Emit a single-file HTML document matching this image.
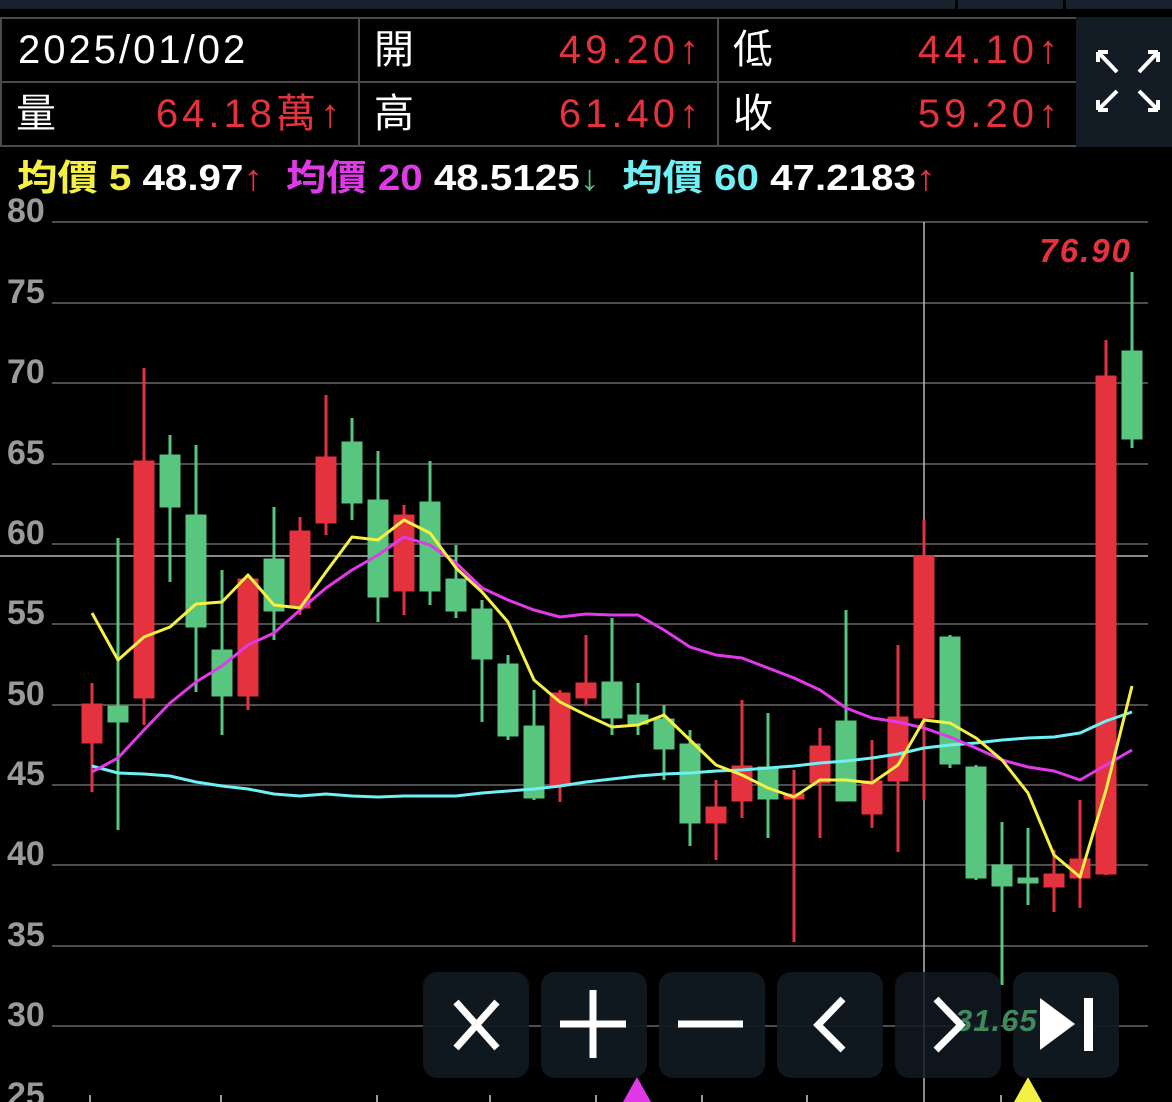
<!DOCTYPE html>
<html><head><meta charset="utf-8"><style>
html,body{margin:0;padding:0;background:#000;width:1172px;height:1102px;overflow:hidden}
body{position:relative;font-family:"Liberation Sans","Noto Sans CJK TC",sans-serif}
.top{position:absolute;left:0;top:0;width:1172px;height:9px;background:#18212c}
.cell{position:absolute;box-sizing:border-box;border:2px solid #4a4a4a;height:66px;color:#fff;font-size:40px;line-height:62px}
.cell .l{position:absolute;left:14px;top:0}
.cell .r{position:absolute;right:14px;top:0;color:#e5323f;letter-spacing:4px}
.side{position:absolute;left:1076px;top:17px;width:96px;height:130px;background:#131c25}
.leg{position:absolute;left:17px;top:157px;font-size:36px;font-weight:bold;white-space:nowrap;line-height:42px;transform:scaleX(1.12);transform-origin:0 0}
.btn{position:absolute;top:972px;width:106px;height:106px;border-radius:14px;background:rgba(17,25,33,0.95)}
</style></head><body>
<div class="top"></div>
<div style="position:absolute;left:955px;top:0;width:3px;height:9px;background:#000"></div>
<div style="position:absolute;left:1063px;top:0;width:3px;height:9px;background:#000"></div>
<div class="cell" style="left:0;top:17px;width:360px"><span class="l" style="left:16px;letter-spacing:3px">2025/01/02</span></div>
<div class="cell" style="left:358px;top:17px;width:361px"><span class="l">開</span><span class="r">49.20↑</span></div>
<div class="cell" style="left:717px;top:17px;width:361px"><span class="l">低</span><span class="r">44.10↑</span></div>
<div class="cell" style="left:0;top:81px;width:360px"><span class="l">量</span><span class="r">64.18萬↑</span></div>
<div class="cell" style="left:358px;top:81px;width:361px"><span class="l">高</span><span class="r">61.40↑</span></div>
<div class="cell" style="left:717px;top:81px;width:361px"><span class="l">收</span><span class="r">59.20↑</span></div>
<div class="side"><svg width="96" height="130" viewBox="1076 17 96 130" stroke="#fff" stroke-width="4" fill="none">
<path d="M1098 52L1117 72M1098 52h10M1098 52v10"/><path d="M1158 52L1139 72M1158 52h-10M1158 52v10"/>
<path d="M1098 110L1117 91M1098 110h10M1098 110v-10"/><path d="M1158 110L1139 91M1158 110h-10M1158 110v-10"/></svg></div>
<div class="leg"><span style="color:#f4f044">均價 5</span> <span style="color:#fff">48.97</span><span style="color:#e5323f">↑</span>&nbsp; <span style="color:#e03ae8">均價 20</span> <span style="color:#fff">48.5125</span><span style="color:#4fc47a">↓</span>&nbsp; <span style="color:#6ef0f4">均價 60</span> <span style="color:#fff">47.2183</span><span style="color:#e5323f">↑</span></div>
<svg style="position:absolute;left:0;top:0" width="1172" height="1102">
<g stroke="#4e4e4e" stroke-width="2">
<line x1="52" x2="1148" y1="222" y2="222"/><line x1="52" x2="1148" y1="303" y2="303"/><line x1="52" x2="1148" y1="383" y2="383"/><line x1="52" x2="1148" y1="464" y2="464"/><line x1="52" x2="1148" y1="544" y2="544"/><line x1="52" x2="1148" y1="624" y2="624"/><line x1="52" x2="1148" y1="705" y2="705"/><line x1="52" x2="1148" y1="785" y2="785"/><line x1="52" x2="1148" y1="865" y2="865"/><line x1="52" x2="1148" y1="946" y2="946"/><line x1="52" x2="1148" y1="1026" y2="1026"/>
</g>
<g fill="#9a9a9a" font-size="34" font-weight="bold" font-family="Liberation Sans">
<text x="7" y="222">80</text><text x="7" y="303">75</text><text x="7" y="383">70</text><text x="7" y="464">65</text><text x="7" y="544">60</text><text x="7" y="624">55</text><text x="7" y="705">50</text><text x="7" y="785">45</text><text x="7" y="865">40</text><text x="7" y="946">35</text><text x="7" y="1026">30</text><text x="7" y="1106">25</text>
</g>
<g stroke="#9a9a9a" stroke-width="2"><line x1="90" x2="90" y1="1095" y2="1102"/><line x1="221" x2="221" y1="1095" y2="1102"/><line x1="377" x2="377" y1="1095" y2="1102"/><line x1="490" x2="490" y1="1095" y2="1102"/><line x1="596" x2="596" y1="1095" y2="1102"/><line x1="702" x2="702" y1="1095" y2="1102"/><line x1="807" x2="807" y1="1095" y2="1102"/><line x1="1001" x2="1001" y1="1095" y2="1102"/></g>
<line x1="0" x2="1148" y1="556" y2="556" stroke="#b8b8b8" stroke-width="1.5"/>
<line x1="924" x2="924" y1="222" y2="1102" stroke="#b8b8b8" stroke-width="1.5"/>
<g stroke-width="3">
<g stroke="#e5323f" fill="#e5323f">
<line x1="92" x2="92" y1="683" y2="792"/><rect x="83" y="705" width="18" height="37"/>
<line x1="144" x2="144" y1="368" y2="725"/><rect x="135" y="462" width="18" height="235"/>
<line x1="248" x2="248" y1="575" y2="710"/><rect x="239" y="580" width="18" height="115"/>
<line x1="300" x2="300" y1="517" y2="615"/><rect x="291" y="532" width="18" height="75"/>
<line x1="326" x2="326" y1="395" y2="535"/><rect x="317" y="458" width="18" height="64"/>
<line x1="404" x2="404" y1="505" y2="615"/><rect x="395" y="516" width="18" height="74"/>
<line x1="560" x2="560" y1="690" y2="802"/><rect x="551" y="694" width="18" height="91"/>
<line x1="586" x2="586" y1="635" y2="705"/><rect x="577" y="684" width="18" height="13"/>
<line x1="716" x2="716" y1="780" y2="860"/><rect x="707" y="808" width="18" height="14"/>
<line x1="742" x2="742" y1="700" y2="818"/><rect x="733" y="767" width="18" height="33"/>
<line x1="794" x2="794" y1="770" y2="942"/><rect x="785" y="795" width="18" height="3"/>
<line x1="820" x2="820" y1="728" y2="838"/><rect x="811" y="747" width="18" height="35"/>
<line x1="872" x2="872" y1="740" y2="828"/><rect x="863" y="782" width="18" height="31"/>
<line x1="898" x2="898" y1="645" y2="852"/><rect x="889" y="718" width="18" height="62"/>
<line x1="924" x2="924" y1="520" y2="800"/><rect x="915" y="557" width="18" height="160"/>
<line x1="1054" x2="1054" y1="850" y2="912"/><rect x="1045" y="875" width="18" height="11"/>
<line x1="1080" x2="1080" y1="800" y2="908"/><rect x="1071" y="860" width="18" height="17"/>
<line x1="1106" x2="1106" y1="340" y2="875"/><rect x="1097" y="377" width="18" height="496"/>
</g>
<g stroke="#58c67e" fill="#58c67e">
<line x1="118" x2="118" y1="538" y2="830"/><rect x="109" y="707" width="18" height="14"/>
<line x1="170" x2="170" y1="435" y2="582"/><rect x="161" y="456" width="18" height="50"/>
<line x1="196" x2="196" y1="445" y2="692"/><rect x="187" y="516" width="18" height="110"/>
<line x1="222" x2="222" y1="570" y2="735"/><rect x="213" y="651" width="18" height="44"/>
<line x1="274" x2="274" y1="507" y2="640"/><rect x="265" y="560" width="18" height="50"/>
<line x1="352" x2="352" y1="418" y2="520"/><rect x="343" y="443" width="18" height="59"/>
<line x1="378" x2="378" y1="451" y2="622"/><rect x="369" y="501" width="18" height="95"/>
<line x1="430" x2="430" y1="461" y2="605"/><rect x="421" y="503" width="18" height="87"/>
<line x1="456" x2="456" y1="545" y2="618"/><rect x="447" y="580" width="18" height="30"/>
<line x1="482" x2="482" y1="600" y2="722"/><rect x="473" y="610" width="18" height="48"/>
<line x1="508" x2="508" y1="655" y2="740"/><rect x="499" y="665" width="18" height="70"/>
<line x1="534" x2="534" y1="690" y2="800"/><rect x="525" y="727" width="18" height="70"/>
<line x1="612" x2="612" y1="618" y2="735"/><rect x="603" y="683" width="18" height="34"/>
<line x1="638" x2="638" y1="683" y2="735"/><rect x="629" y="716" width="18" height="7"/>
<line x1="664" x2="664" y1="705" y2="780"/><rect x="655" y="720" width="18" height="28"/>
<line x1="690" x2="690" y1="730" y2="846"/><rect x="681" y="745" width="18" height="77"/>
<line x1="768" x2="768" y1="713" y2="838"/><rect x="759" y="768" width="18" height="30"/>
<line x1="846" x2="846" y1="610" y2="800"/><rect x="837" y="722" width="18" height="78"/>
<line x1="950" x2="950" y1="635" y2="768"/><rect x="941" y="638" width="18" height="125"/>
<line x1="976" x2="976" y1="765" y2="880"/><rect x="967" y="768" width="18" height="109"/>
<line x1="1002" x2="1002" y1="822" y2="985"/><rect x="993" y="866" width="18" height="19"/>
<line x1="1028" x2="1028" y1="828" y2="905"/><rect x="1019" y="879" width="18" height="3"/>
<line x1="1132" x2="1132" y1="272" y2="448"/><rect x="1123" y="352" width="18" height="86"/>
</g></g>
<g fill="none" stroke-width="3" stroke-linejoin="round">
<polyline stroke="#6ef0f4" points="92,766 118,773 144,774 170,776 196,782 222,786 248,789 274,794 300,796 326,794 352,796 378,797 404,796 430,796 456,796 482,793 508,791 534,789 560,786 586,782 612,779 638,776 664,774 690,773 716,771 742,770 768,768 794,766 820,763 846,761 872,758 898,754 924,748 950,745 976,743 1002,740 1028,738 1054,737 1080,733 1106,721 1132,712"/>
<polyline stroke="#e03ae8" points="92,772 118,758 144,730 170,703 196,682 222,666 248,645 274,633 300,610 326,588 352,570 378,555 404,537 430,545 456,563 482,588 508,600 534,610 560,617 586,614 612,615 638,615 664,630 690,647 716,655 742,658 768,668 794,678 820,690 846,708 872,718 898,722 924,728 950,737 976,748 1002,760 1028,767 1054,771 1080,780 1106,765 1132,750"/>
<polyline stroke="#f4f044" points="92,613 118,660 144,637 170,627 196,604 222,602 248,575 274,605 300,608 326,572 352,537 378,540 404,520 430,533 456,568 482,592 508,622 534,680 560,702 586,715 612,727 638,725 664,715 690,740 716,765 742,775 768,788 794,797 820,780 846,780 872,783 898,765 924,720 950,723 976,738 1002,760 1028,793 1054,855 1080,877 1106,790 1132,686"/>
</g>
<text x="1132" y="262" text-anchor="end" fill="#e5323f" font-size="33" font-weight="bold" font-style="italic" letter-spacing="2">76.90</text>
<polygon points="637,1077 623,1102 651,1102" fill="#e03ae8"/>
<polygon points="1028,1077 1014,1102 1042,1102" fill="#f4f044"/>
</svg>
<div class="btn" style="left:423px"></div><div class="btn" style="left:541px"></div><div class="btn" style="left:659px"></div><div class="btn" style="left:777px"></div><div class="btn" style="left:895px;background:rgba(17,25,33,0.85)"></div><div class="btn" style="left:1013px"></div>
<svg style="position:absolute;left:0;top:0" width="1172" height="1102">
<text x="955" y="1031" fill="#3f8a5c" font-size="31" font-weight="bold" font-style="italic" letter-spacing="1">31.65</text>
<g stroke="#fff" stroke-width="7" fill="none">
<path d="M456 1002L497 1048M497 1002L456 1048"/>
<path d="M560 1024h66M593 990v68"/>
<path d="M678 1024h65"/>
<path d="M843 999L818 1025L843 1050"/>
<path d="M936 999L961 1025L936 1050"/>
</g>
<polygon points="1040,998 1040,1050 1075,1024" fill="#fff"/>
<rect x="1084" y="998" width="9" height="53" fill="#fff"/>
</svg>
</body></html>
